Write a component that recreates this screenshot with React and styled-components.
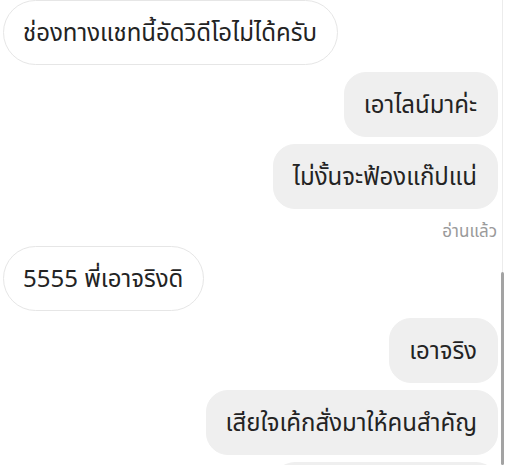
import React from "react";
import styled, { createGlobalStyle } from "styled-components";

const Global = createGlobalStyle`
  html, body { margin: 0; padding: 0; background: #fff; overflow: hidden; }
  body { font-family: "Noto Sans", "Noto Sans Thai", sans-serif; }
`;

const Screen = styled.div`
  position: relative;
  width: 508px;
  height: 465px;
  overflow: hidden;
  background: #fff;
`;

const Thread = styled.div`
  display: flex;
  flex-direction: column;
  gap: 7px;
  padding: 0 10px 0 3px;
`;

const Row = styled.div`
  display: flex;
  justify-content: ${(p) => (p.$out ? "flex-end" : "flex-start")};
`;

const Bubble = styled.div`
  box-sizing: border-box;
  height: 65px;
  display: flex;
  align-items: center;
  padding: 2px 20px 0 19px;
  font-size: 24px;
  color: #232323;
  white-space: nowrap;
  border-radius: ${(p) => (p.$out ? "22px" : "33px")};
  background: ${(p) => (p.$out ? "#efefef" : "#fff")};
  border: 1px solid ${(p) => (p.$out ? "#efefef" : "#e6e6e6")};
`;

const Stub = styled.div`
  box-sizing: border-box;
  width: ${(p) => p.$w}px;
  height: 65px;
  border-radius: 22px;
  background: #efefef;
`;

const Seen = styled.div`
  height: 23px;
  display: flex;
  justify-content: flex-end;
  align-items: flex-end;
  line-height: 1;
  font-size: 17px;
  color: #9a9a9a;
  padding-right: 1px;
`;

const Track = styled.div`
  position: absolute;
  top: 0;
  bottom: 0;
  right: 5px;
  width: 1px;
  background: #ececec;
`;

const Thumb = styled.div`
  position: absolute;
  top: 272px;
  bottom: 0;
  right: 4px;
  width: 3px;
  border-radius: 2px;
  background: #a3a3a3;
`;

export default function App() {
  return (
    <Screen>
      <Global />
      <Thread>
        <Row>
          <Bubble>ช่องทางแชทนี้อัดวิดีโอไม่ได้ครับ</Bubble>
        </Row>
        <Row $out>
          <Bubble $out>เอาไลน์มาค่ะ</Bubble>
        </Row>
        <Row $out>
          <Bubble $out>ไม่งั้นจะฟ้องแก๊ปแน่</Bubble>
        </Row>
        <Seen>อ่านแล้ว</Seen>
        <Row>
          <Bubble>5555 พี่เอาจริงดิ</Bubble>
        </Row>
        <Row $out>
          <Bubble $out>เอาจริง</Bubble>
        </Row>
        <Row $out>
          <Bubble $out>เสียใจเค้กสั่งมาให้คนสำคัญ</Bubble>
        </Row>
        <Row $out>
          <Stub $w={225} />
        </Row>
      </Thread>
      <Track />
      <Thumb />
    </Screen>
  );
}
